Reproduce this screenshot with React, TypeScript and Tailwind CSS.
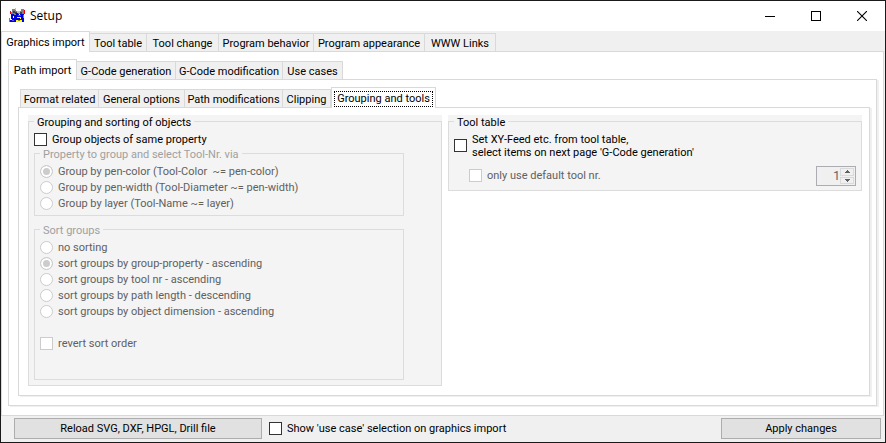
import type { ReactNode } from "react";

type TabItem = { name: string; width: string };

const mainTabs: TabItem[] = [
  { name: "Graphics import", width: "w-[89px]" },
  { name: "Tool table", width: "w-[57px]" },
  { name: "Tool change", width: "w-[72px]" },
  { name: "Program behavior", width: "w-[95px]" },
  { name: "Program appearance", width: "w-[111px]" },
  { name: "WWW Links", width: "w-[71px]" },
];

const importTabs: TabItem[] = [
  { name: "Path import", width: "w-[69px]" },
  { name: "G-Code generation", width: "w-[99px]" },
  { name: "G-Code modification", width: "w-[107px]" },
  { name: "Use cases", width: "w-[60px]" },
];

const pathTabs: TabItem[] = [
  { name: "Format related", width: "w-[79px]" },
  { name: "General options", width: "w-[86px]" },
  { name: "Path modifications", width: "w-[98px]" },
  { name: "Clipping", width: "w-[48px]" },
  { name: "Grouping and tools", width: "w-[105px]" },
];

const propertyOptions = [
  "Group by pen-color (Tool-Color  ~= pen-color)",
  "Group by pen-width (Tool-Diameter ~= pen-width)",
  "Group by layer (Tool-Name ~= layer)",
];

const sortOptions = [
  "no sorting",
  "sort groups by group-property - ascending",
  "sort groups by tool nr - ascending",
  "sort groups by path length - descending",
  "sort groups by object dimension - ascending",
];

function TabStrip({ tabs, active, focused = false }: { tabs: TabItem[]; active: number; focused?: boolean }) {
  return (
    <div role="tablist" className="flex h-5 items-end">
      {tabs.map((tab, i) =>
        i === active ? (
          <button
            key={tab.name}
            role="tab"
            aria-selected="true"
            className={`${tab.width} relative -mb-px h-[21px] shrink-0 whitespace-nowrap border border-b-0 border-[#d9d9d9] bg-white px-0.5 pt-0.5 pb-px`}
          >
            <span
              className={
                focused
                  ? "block h-4 border border-dotted border-black leading-[14px]"
                  : "block h-4 leading-4"
              }
            >
              {tab.name}
            </span>
          </button>
        ) : (
          <button
            key={tab.name}
            role="tab"
            aria-selected="false"
            className={`${tab.width} h-[18px] shrink-0 whitespace-nowrap border-t border-r border-[#d9d9d9] bg-[#f0f0f0] pt-0.5 text-center leading-4 first:border-l`}
          >
            {tab.name}
          </button>
        ),
      )}
    </div>
  );
}

function Group({ title, muted = false, className = "", children }: { title: string; muted?: boolean; className?: string; children: ReactNode }) {
  return (
    <fieldset className={`min-w-0 border border-[#dcdcdc] pl-[5px] ${className}`}>
      <legend className={`h-[13px] px-[3px] leading-[15px] ${muted ? "text-[#a0a0a0]" : "text-black"}`}>{title}</legend>
      {children}
    </fieldset>
  );
}

function Check({ label, disabled = false, className = "" }: { label: ReactNode; disabled?: boolean; className?: string }) {
  return (
    <label className={`flex items-center gap-[5px] whitespace-nowrap ${disabled ? "text-[#606060]" : "text-black"} ${className}`}>
      <input
        type="checkbox"
        disabled={disabled}
        className="size-[13px] shrink-0 appearance-none border border-[#333333] bg-white checked:bg-[#333333] disabled:border-[#cccccc]"
      />
      <span className="pt-px">{label}</span>
    </label>
  );
}

function RadioRow({ name, label, checked }: { name: string; label: string; checked: boolean }) {
  return (
    <label className="flex h-4 items-center gap-[5px] whitespace-pre text-[#606060]">
      <input
        type="radio"
        name={name}
        defaultChecked={checked}
        disabled
        className="size-[13px] shrink-0 appearance-none rounded-full border border-[#cccccc] bg-white checked:bg-[#cccccc] checked:shadow-[inset_0_0_0_2px_#ffffff]"
      />
      <span className="pt-0.5">{label}</span>
    </label>
  );
}

function AppIcon() {
  return (
    <svg width="16" height="16" viewBox="0 0 16 16" shapeRendering="crispEdges" aria-hidden="true">
      <path fill="#808080" d="M3 1h4v2h5V1h3v5h-3v1H2V4h1z" />
      <path fill="#404040" d="M4 3h2v1h2v2H6V5H4zM11 4h2v2h-2z" />
      <path fill="#c0c0c0" d="M6 0h1v2H6zM8 3h3v2H8z" />
      <path fill="#f00000" d="M1 3h1v3H1zM15 2h1v4h-1z" />
      <path fill="#0000e0" d="M2 6h3v1h2V5h2v1h6v8H1v-2h1z" />
      <path fill="#808080" d="M0 10h1v4H0zM14 7h1v3h-1z" />
      <path fill="#ffffff" d="M4 8h1v2H4zM2 11h1v1H2zM10 6h1v1h-1z" />
      <path fill="#5050ff" d="M9 7h3v1H9zM3 12h2v1H3z" />
      <path fill="#ffff00" d="M8 9h4v2h-1v-1H8zM7 12h6v2H7z" />
      <path fill="#909000" d="M9 12h2v1H9z" />
    </svg>
  );
}

function TitleBar() {
  return (
    <header className="flex h-[30px] items-center justify-between bg-white pl-2">
      <div className="flex items-center gap-[5px]">
        <AppIcon />
        <h1 className="font-['Open_Sans',sans-serif] text-xs">Setup</h1>
      </div>
      <div className="flex h-full">
        <button aria-label="Minimize" className="flex w-[46px] items-center justify-center">
          <svg width="10" height="10" viewBox="0 0 10 10" shapeRendering="crispEdges">
            <path d="M0 5h10v1H0z" />
          </svg>
        </button>
        <button aria-label="Maximize" className="flex w-[46px] items-center justify-center">
          <svg width="10" height="10" viewBox="0 0 10 10" fill="none" stroke="#000" shapeRendering="crispEdges">
            <path d="M0.5 0.5h9v9h-9z" />
          </svg>
        </button>
        <button aria-label="Close" className="flex w-[46px] items-center justify-center">
          <svg width="10" height="10" viewBox="0 0 10 10" fill="none" stroke="#000" strokeWidth="1.1">
            <path d="M0 0l10 10M10 0L0 10" />
          </svg>
        </button>
      </div>
    </header>
  );
}

function GroupingPanel() {
  return (
    <div className="bg-[#f4f4f4]">
      <Group title="Grouping and sorting of objects" className="pb-[5px]">
        <Check label="Group objects of same property" className="mt-[3px] h-4" />
        <Group title="Property to group and select Tool-Nr. via" muted className="mr-[37px] pt-[3px] pb-1">
          {propertyOptions.map((label, i) => (
            <RadioRow key={label} name="property" label={label} checked={i === 0} />
          ))}
        </Group>
        <Group title="Sort groups" muted className="mt-[7px] mr-[37px] pt-[3px] pb-7">
          {sortOptions.map((label, i) => (
            <RadioRow key={label} name="sort" label={label} checked={i === 1} />
          ))}
          <Check label="revert sort order" disabled className="mt-4 h-4" />
        </Group>
      </Group>
    </div>
  );
}

function ToolTablePanel() {
  return (
    <div className="self-start bg-[#f4f4f4]">
      <Group title="Tool table" className="pt-1 pr-[5px] pb-1">
        <Check
          className="leading-[13px]"
          label={
            <>
              Set XY-Feed etc. from tool table,
              <br />
              select items on next page 'G-Code generation'
            </>
          }
        />
        <div className="mt-[7px] flex items-start justify-between pl-[15px]">
          <Check label="only use default tool nr." disabled className="h-[18px]" />
          <div className="flex h-5 w-10 border border-[#abadb3] bg-[#f0f0f0] p-px">
            <input
              type="number"
              aria-label="Default tool number"
              defaultValue={1}
              disabled
              className="w-[22px] appearance-none text-right text-xs leading-4 text-[#606060] [&::-webkit-inner-spin-button]:appearance-none"
            />
            <div className="flex w-3.5 flex-col gap-px">
              <button aria-label="Increase" disabled className="flex flex-1 items-center justify-center border border-[#dadada]">
                <svg width="5" height="3" viewBox="0 0 5 3" fill="#606060" shapeRendering="crispEdges">
                  <path d="M2 0h1v1h1v1h1v1H0V2h1V1h1z" />
                </svg>
              </button>
              <button aria-label="Decrease" disabled className="flex flex-1 items-center justify-center border border-[#dadada]">
                <svg width="5" height="3" viewBox="0 0 5 3" fill="#606060" shapeRendering="crispEdges">
                  <path d="M0 0h5v1H4v1H3v1H2V2H1V1H0z" />
                </svg>
              </button>
            </div>
          </div>
        </div>
      </Group>
    </div>
  );
}

export default function App() {
  return (
    <div className="flex min-h-screen flex-col border border-[#1a1a1a] bg-[#f0f0f0] font-[Roboto,sans-serif] text-[11px] leading-4 text-black">
      <TitleBar />
      <main className="flex grow flex-col">
        <TabStrip tabs={mainTabs} active={0} />
        <div className="mr-px flex grow flex-col border border-[#d9d9d9] bg-white pt-[7px] pr-[6px] pb-[9px] pl-[6px]">
          <TabStrip tabs={importTabs} active={0} />
          <div className="flex grow flex-col border border-[#d9d9d9] bg-white pt-[7px] pr-[6px] pb-[9px] pl-[9px] shadow-[2px_1px_0_#f0f0f0]">
            <div className="pl-[2px]">
              <TabStrip tabs={pathTabs} active={4} focused />
            </div>
            <div className="grid grow grid-cols-2 content-start gap-[6px] border border-[#d9d9d9] bg-white pt-[7px] pr-[7px] pb-[9px] pl-[9px] shadow-[2px_1px_0_#f0f0f0]">
              <GroupingPanel />
              <ToolTablePanel />
            </div>
          </div>
        </div>
      </main>
      <footer className="flex items-center pt-[2px] pr-1 pb-[3px] pl-[13px]">
        <button className="h-[21px] w-[248px] border border-[#adadad] bg-[#e1e1e1] pt-px">Reload SVG, DXF, HPGL, Drill file</button>
        <Check label="Show 'use case' selection on graphics import" className="ml-[7px]" />
        <button className="ml-auto h-[21px] w-[160px] border border-[#adadad] bg-[#e1e1e1] pt-px">Apply changes</button>
      </footer>
    </div>
  );
}
